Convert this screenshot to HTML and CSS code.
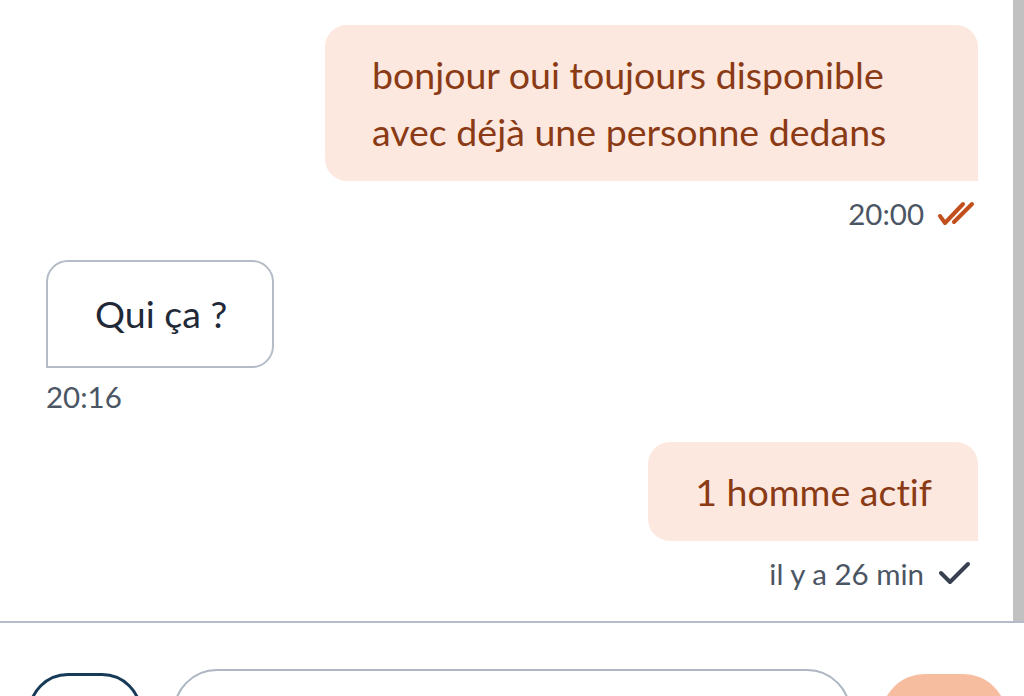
FILE: index.html
```html
<!DOCTYPE html>
<html lang="fr">
<head>
<meta charset="utf-8">
<title>Conversation</title>
<link rel="stylesheet" href="styles.css">
</head>
<body>
<div class="page">
  <div class="chat">
    <div class="messages">
      <div class="group mine">
        <div class="bubble out">bonjour oui toujours disponible avec déjà une personne dedans</div>
        <div class="meta">
          <span class="time">20:00</span>
          <svg class="tick double" width="40" height="28" viewBox="0 0 40 28" aria-hidden="true">
            <path d="M4 17 L9 24 L27 5" fill="none" stroke="#c2501c" stroke-width="4" stroke-linecap="round" stroke-linejoin="round"/>
            <path d="M18 23 L36 5" fill="none" stroke="#c2501c" stroke-width="4" stroke-linecap="round"/>
          </svg>
        </div>
      </div>
      <div class="group theirs">
        <div class="bubble in">Qui ça ?</div>
        <div class="meta">
          <span class="time">20:16</span>
        </div>
      </div>
      <div class="group mine">
        <div class="bubble out">1 homme actif</div>
        <div class="meta">
          <span class="time">il y a 26 min</span>
          <svg class="tick" width="40" height="28" viewBox="0 0 40 28" aria-hidden="true">
            <path d="M5 14 L14 23 L32 5" fill="none" stroke="#374151" stroke-width="4" stroke-linecap="round" stroke-linejoin="round"/>
          </svg>
        </div>
      </div>
    </div>
    <div class="scrollbar"></div>
  </div>
  <div class="composer">
    <div class="btn-left"></div>
    <div class="input"></div>
    <div class="btn-send"></div>
  </div>
</div>
</body>
</html>
```

FILE: styles.css
```css
html, body {
  margin: 0;
  padding: 0;
  height: 100%;
  overflow: hidden;
  background: #ffffff;
}

body {
  font-family: "Lato", "Noto Sans", sans-serif;
  font-variant-ligatures: none;
}

.page {
  display: flex;
  flex-direction: column;
  height: 696px;
  overflow: hidden;
}

.chat {
  display: flex;
  height: 621px;
  border-bottom: 2px solid #b4bdc7;
  flex: none;
}

.messages {
  flex: 1;
  display: flex;
  flex-direction: column;
  gap: 27px;
  padding: 25px 35px 0 46px;
}

.scrollbar {
  width: 11px;
  background: #c1c1c1;
}

.group {
  display: flex;
  flex-direction: column;
}

.group.mine {
  align-items: flex-end;
}

.group.theirs {
  align-items: flex-start;
}

.bubble {
  font-size: 37.5px;
  line-height: 57px;
  box-sizing: border-box;
}

.bubble.out {
  max-width: 653px;
  background: #fde8df;
  color: #8a3b15;
  padding: 21px 46px 21px 47px;
  border-radius: 22px 22px 0 22px;
}

.bubble.in {
  background: #ffffff;
  color: #1f2937;
  border: 2px solid #b4bdc7;
  padding: 23px 45px 24px 47px;
  border-radius: 22px 22px 22px 0;
}

.meta {
  display: flex;
  align-items: center;
  gap: 12px;
  margin-top: 12px;
  height: 40px;
}

.group.theirs .meta {
  margin-top: 9px;
  height: 38px;
}

.group.mine .meta {
  margin-right: 2px;
}

.time {
  font-size: 29.5px;
  color: #4b5563;
}

.tick {
  display: block;
}

.composer {
  flex: 1;
  min-height: 0;
  overflow: hidden;
  display: flex;
  align-items: flex-start;
  padding: 46px 14px 0 28px;
}

.btn-left {
  width: 108px;
  height: 90px;
  border: 3px solid #163a58;
  border-radius: 40px;
  margin-top: 4px;
  flex: none;
}

.input {
  width: 674px;
  height: 90px;
  border: 2px solid #adb6c1;
  border-radius: 44px;
  margin-left: 31px;
  flex: none;
}

.btn-send {
  width: 126px;
  height: 90px;
  background: #f6bd9f;
  border-radius: 44px;
  margin-top: 5px;
  margin-left: 30px;
  flex: none;
}
```
